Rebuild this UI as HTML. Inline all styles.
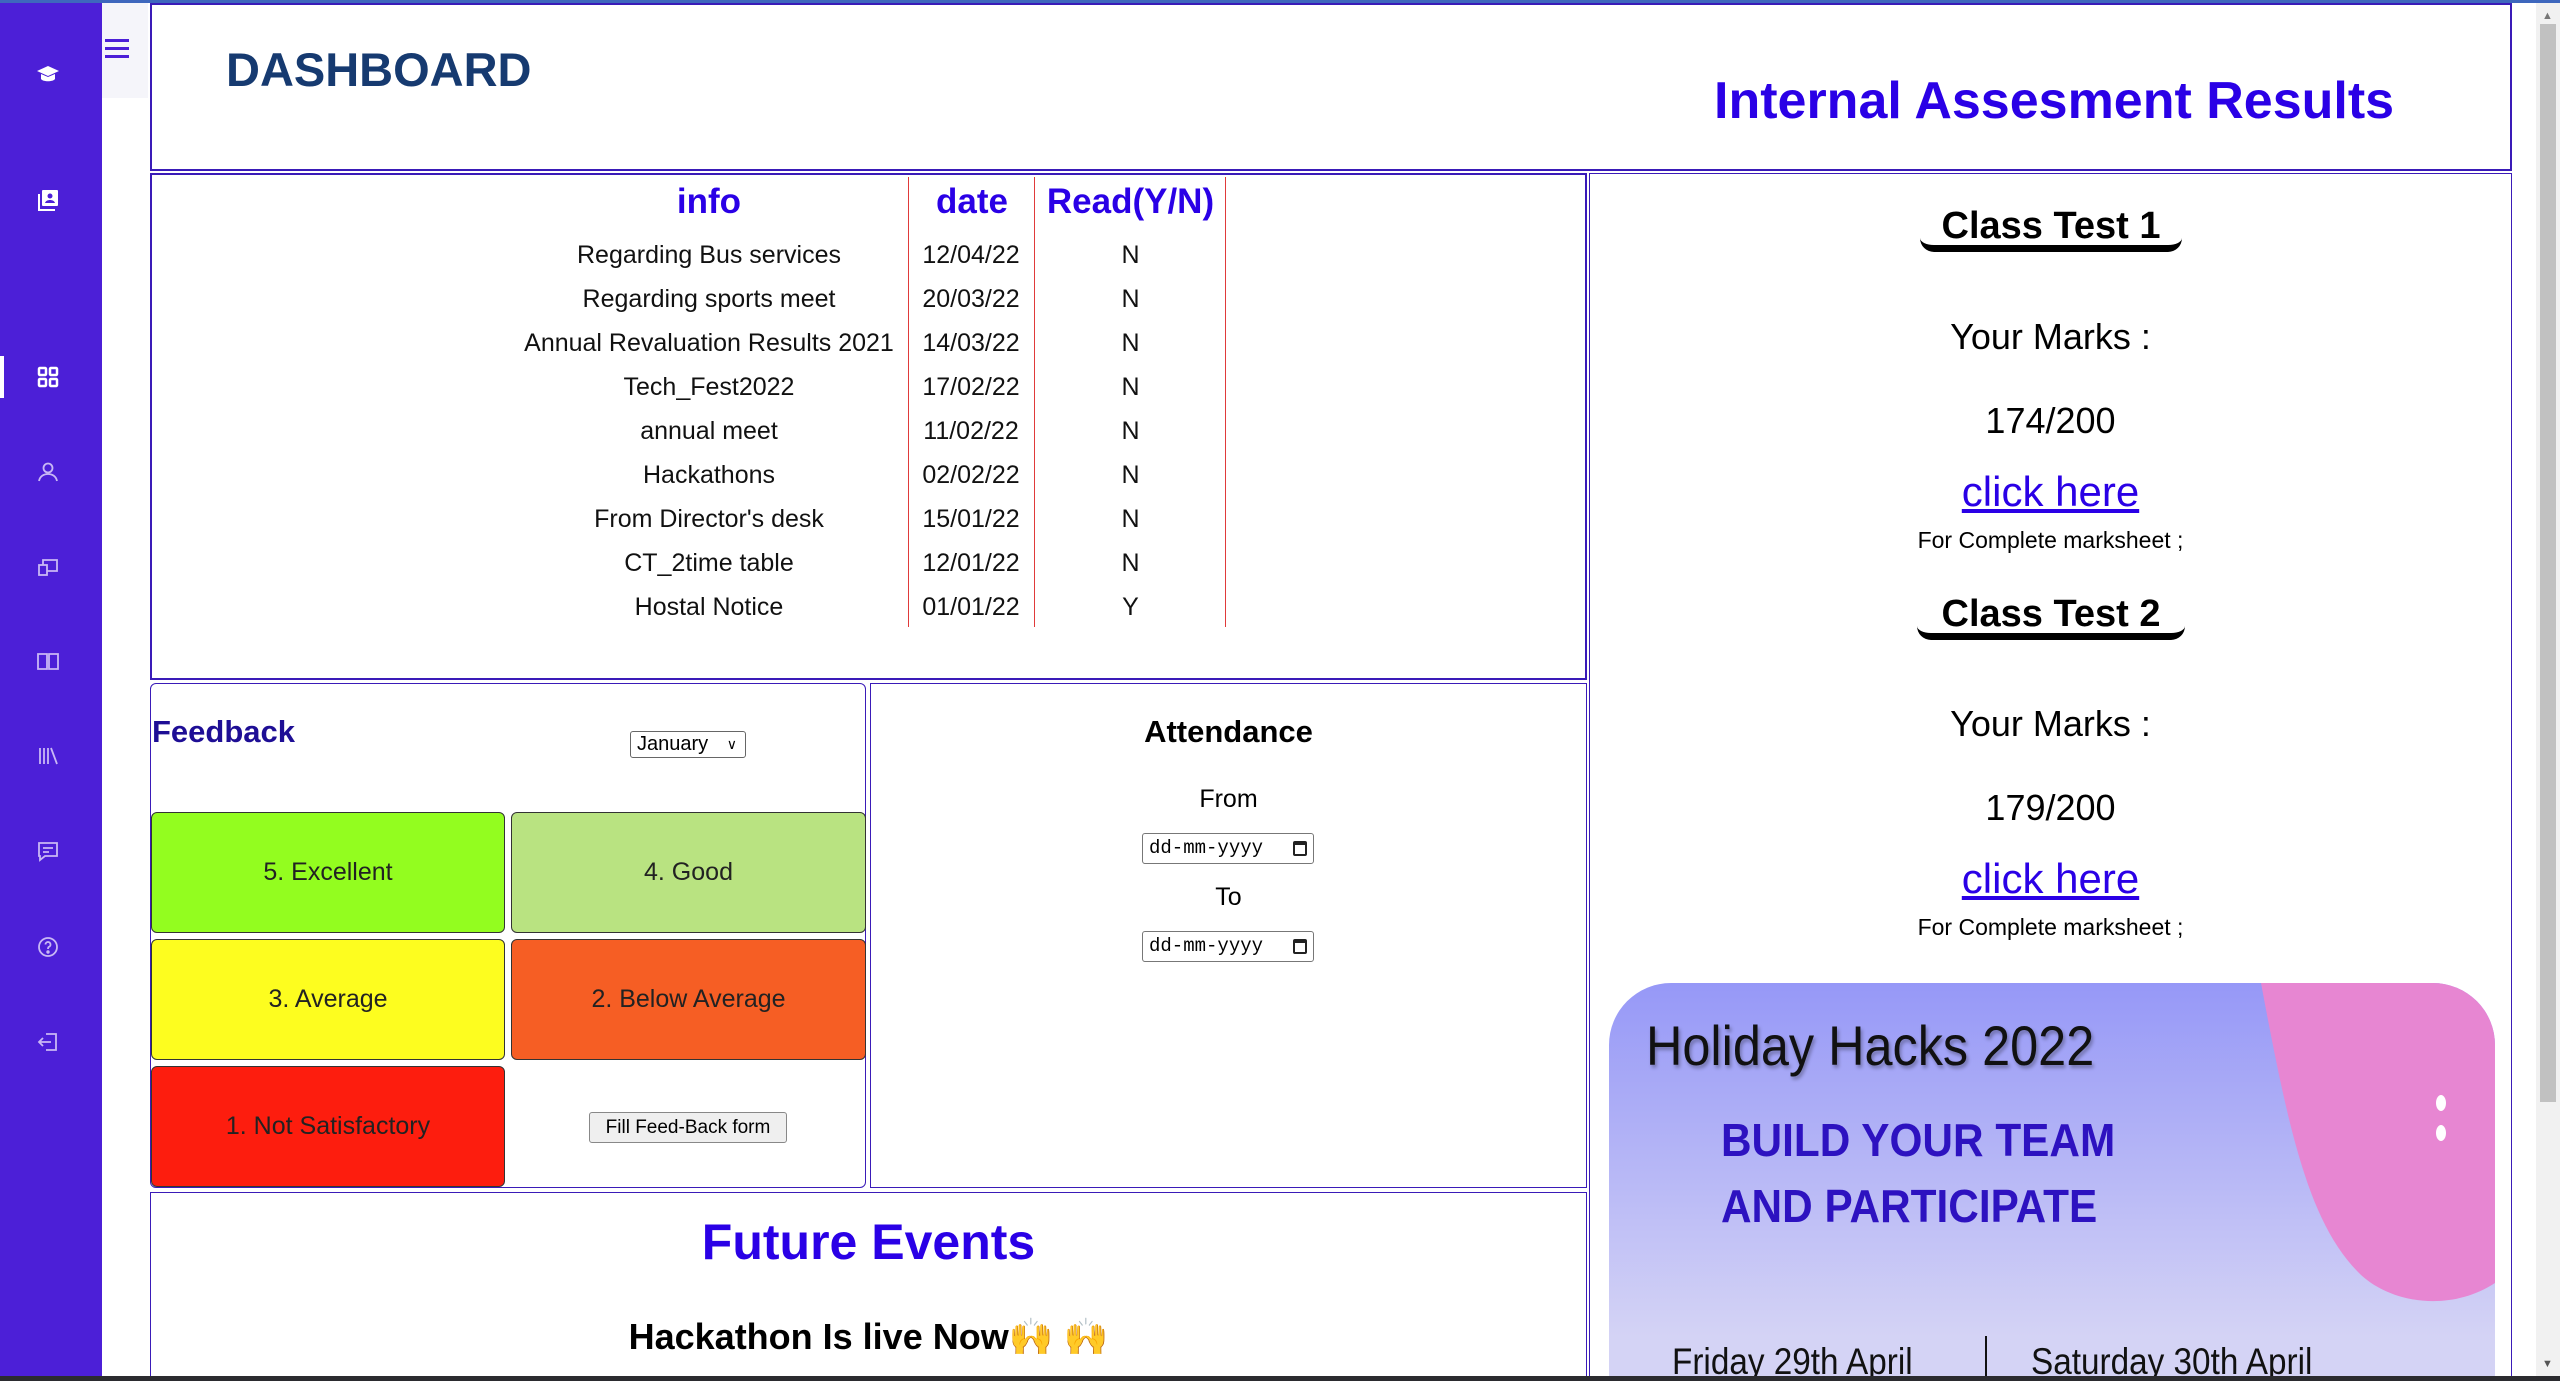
<!DOCTYPE html>
<html><head><meta charset="utf-8"><style>
*{box-sizing:border-box;margin:0;padding:0}
html,body{width:2560px;height:1381px;overflow:hidden}
body{background:#fff;position:relative;font-family:"Liberation Sans",sans-serif;color:#000}
.a{position:absolute}
.box{position:absolute;border:2px solid #3a1bb8}
.c{position:absolute;text-align:center;white-space:nowrap}
.btn{position:absolute;border:1.5px solid #333;border-radius:6px;display:flex;align-items:center;justify-content:center;font-size:25px;color:#222}
.ic{position:absolute;left:36px;width:24px;height:24px}
.row{position:absolute;left:150px;width:1436px;height:44px;font-size:25px;color:#111}
.row span{position:absolute;top:0;line-height:40px;text-align:center;white-space:nowrap}
.row span:nth-child(1){left:200px;width:718px}
.row span:nth-child(2){left:758px;width:126px}
.row span:nth-child(3){left:886px;width:189px}
.vl{position:absolute;width:1px;background:#e03a3a}
.ct{position:absolute;left:1920px;width:262px;height:46px;border-bottom:7px solid #000;border-radius:0 0 14px 14px;text-align:center;font-weight:bold;font-size:38px;line-height:40px}
.inp{position:absolute;left:1142px;width:172px;height:31px;border:1px solid #777;border-radius:3px;font-family:"Liberation Mono",monospace;font-size:19px;line-height:29px;padding-left:6px}
.inp i{position:absolute;right:6px;top:7px;width:14px;height:15px;border:2px solid #222;border-top-width:4px;border-radius:2px}
</style></head><body>
<div class="a" style="left:0;top:0;width:2560px;height:3px;background:#3e67bd"></div>
<div class="a" style="left:0;top:3px;width:102px;height:1378px;background:#4c1fd7"></div>
<div class="a" style="left:102px;top:3px;width:46px;height:95px;background:#f5f5fa"></div>
<div class="a" style="left:105px;top:39px;width:24px;height:3px;background:#4c1fd7"></div>
<div class="a" style="left:105px;top:47px;width:24px;height:3px;background:#4c1fd7"></div>
<div class="a" style="left:105px;top:55px;width:24px;height:3px;background:#4c1fd7"></div>
<svg class="ic" style="top:62px" viewBox="0 0 24 24"><path d="M1 9 12 4 23 9 12 14Z M5 12v5c2 3 12 3 14 0v-5l-7 3z" fill="#fff"/></svg>
<svg class="ic" style="top:188px" viewBox="0 0 24 24"><rect x="6" y="2" width="16" height="16" rx="1" fill="#fff"/><circle cx="14" cy="8" r="2.5" fill="#4c1fd7"/><path d="M9 15c1-4 9-4 10 0z" fill="#4c1fd7"/><path d="M3 6v16h16" stroke="#fff" stroke-width="2" fill="none"/></svg>
<div class="a" style="left:0;top:356px;width:4px;height:42px;background:#fff"></div>
<svg class="ic" style="top:365px" viewBox="0 0 24 24" fill="none" stroke="#fff" stroke-width="2.5"><rect x="3" y="3" width="7" height="7" rx="1"/><rect x="14" y="3" width="7" height="7" rx="1"/><rect x="3" y="14" width="7" height="7" rx="1"/><rect x="14" y="14" width="7" height="7" rx="1"/></svg>
<svg class="ic" style="top:460px" viewBox="0 0 24 24" fill="none" stroke="#c9b8f5" stroke-width="1.8"><circle cx="12" cy="8" r="4.5"/><path d="M3 21c1-5 5-7 9-7s8 2 9 7"/></svg>
<svg class="ic" style="top:555px" viewBox="0 0 24 24" fill="none" stroke="#c9b8f5" stroke-width="1.8"><rect x="3" y="10" width="8" height="10"/><path d="M7 10V5h14v11H11"/></svg>
<svg class="ic" style="top:649px" viewBox="0 0 24 24" fill="none" stroke="#c9b8f5" stroke-width="1.8"><path d="M2 5h9v15H2z M13 5h9v15h-9z"/></svg>
<svg class="ic" style="top:744px" viewBox="0 0 24 24" fill="none" stroke="#c9b8f5" stroke-width="1.8"><path d="M4 4v16 M8 4v16 M12 4v16 M15 4l6 16"/></svg>
<svg class="ic" style="top:839px" viewBox="0 0 24 24" fill="none" stroke="#c9b8f5" stroke-width="1.8"><path d="M3 4h18v13H9l-5 4v-4H3z M7 9h10 M7 13h6"/></svg>
<svg class="ic" style="top:935px" viewBox="0 0 24 24" fill="none" stroke="#c9b8f5" stroke-width="1.8"><circle cx="12" cy="12" r="9"/><path d="M9.5 9.5a2.5 2.5 0 1 1 3.5 2.3c-1 .4-1 1.2-1 2.2"/><circle cx="12" cy="17" r=".8" fill="#c9b8f5"/></svg>
<svg class="ic" style="top:1030px" viewBox="0 0 24 24" fill="none" stroke="#c9b8f5" stroke-width="1.8"><path d="M10 4h10v16H10 M15 12H3 M7 8l-4 4 4 4"/></svg>

<div class="box" style="left:150px;top:3px;width:2362px;height:168px"></div>
<div class="a" style="left:226px;top:42px;font-size:47px;font-weight:bold;color:#163a70">DASHBOARD</div>
<div class="a" style="left:1714px;top:71px;font-size:52px;font-weight:bold;color:#2a00e6">Internal Assesment Results</div>

<div class="box" style="left:150px;top:173px;width:1437px;height:507px"></div>
<div class="vl" style="left:908px;top:177px;height:450px"></div>
<div class="vl" style="left:1034px;top:177px;height:450px"></div>
<div class="vl" style="left:1225px;top:177px;height:450px"></div>
<div class="c" style="left:609px;width:200px;top:182px;font-size:35px;font-weight:bold;color:#2a00e6">info</div>
<div class="c" style="left:910px;width:124px;top:182px;font-size:35px;font-weight:bold;color:#2a00e6">date</div>
<div class="c" style="left:1036px;width:189px;top:182px;font-size:35px;font-weight:bold;color:#2a00e6">Read(Y/N)</div>
<div class="row" style="top:235px"><span>Regarding Bus services</span><span>12/04/22</span><span>N</span></div>
<div class="row" style="top:279px"><span>Regarding sports meet</span><span>20/03/22</span><span>N</span></div>
<div class="row" style="top:323px"><span>Annual Revaluation Results 2021</span><span>14/03/22</span><span>N</span></div>
<div class="row" style="top:367px"><span>Tech_Fest2022</span><span>17/02/22</span><span>N</span></div>
<div class="row" style="top:411px"><span>annual meet</span><span>11/02/22</span><span>N</span></div>
<div class="row" style="top:455px"><span>Hackathons</span><span>02/02/22</span><span>N</span></div>
<div class="row" style="top:499px"><span>From Director's desk</span><span>15/01/22</span><span>N</span></div>
<div class="row" style="top:543px"><span>CT_2time table</span><span>12/01/22</span><span>N</span></div>
<div class="row" style="top:587px"><span>Hostal Notice</span><span>01/01/22</span><span>Y</span></div>

<div class="box" style="left:150px;top:683px;width:716px;height:505px;border-width:1.5px;border-radius:6px"></div>
<div class="a" style="left:152px;top:714px;font-size:31px;font-weight:bold;color:#1e0e95">Feedback</div>
<div class="a" style="left:630px;top:731px;width:116px;height:27px;border:1px solid #666;border-radius:3px;font-size:20px;line-height:25px;padding-left:6px">January <span style="position:absolute;right:8px;font-size:14px">&#8744;</span></div>
<div class="btn" style="left:151px;top:812px;width:354px;height:121px;background:#93fd1f">5. Excellent</div>
<div class="btn" style="left:511px;top:812px;width:355px;height:121px;background:#b9e381">4. Good</div>
<div class="btn" style="left:151px;top:939px;width:354px;height:121px;background:#fdfd1f">3. Average</div>
<div class="btn" style="left:511px;top:939px;width:355px;height:121px;background:#f65e24">2. Below Average</div>
<div class="btn" style="left:151px;top:1066px;width:354px;height:121px;background:#fd1d0e">1. Not Satisfactory</div>
<div class="a" style="left:589px;top:1112px;width:198px;height:31px;border:1px solid #888;border-radius:3px;background:#efefef;font-size:19px;line-height:29px;text-align:center">Fill Feed-Back form</div>

<div class="box" style="left:870px;top:683px;width:717px;height:505px;border-width:1.5px"></div>
<div class="c" style="left:870px;width:717px;top:714px;font-size:31px;font-weight:bold">Attendance</div>
<div class="c" style="left:870px;width:717px;top:785px;font-size:25px">From</div>
<div class="inp" style="top:833px">dd-mm-yyyy<i></i></div>
<div class="c" style="left:870px;width:717px;top:883px;font-size:25px">To</div>
<div class="inp" style="top:931px">dd-mm-yyyy<i></i></div>

<div class="box" style="left:150px;top:1192px;width:1437px;height:190px;border-width:1.5px"></div>
<div class="c" style="left:150px;width:1437px;top:1213px;font-size:50px;font-weight:bold;color:#2a00e6">Future Events</div>
<div class="c" style="left:150px;width:1437px;top:1316px;font-size:36px;font-weight:bold">Hackathon Is live Now🙌 🙌</div>

<div class="box" style="left:1589px;top:173px;width:923px;height:1210px;border-width:1.5px"></div>
<div class="ct" style="top:206px">Class Test 1</div>
<div class="c" style="left:1589px;width:923px;top:316px;font-size:36px">Your Marks :</div>
<div class="c" style="left:1589px;width:923px;top:400px;font-size:36px">174/200</div>
<div class="c" style="left:1589px;width:923px;top:468px;font-size:42px;color:#2a00e6;text-decoration:underline">click here</div>
<div class="c" style="left:1589px;width:923px;top:527px;font-size:23px">For Complete marksheet ;</div>
<div class="ct" style="top:594px;left:1917px;width:268px">Class Test 2</div>
<div class="c" style="left:1589px;width:923px;top:703px;font-size:36px">Your Marks :</div>
<div class="c" style="left:1589px;width:923px;top:787px;font-size:36px">179/200</div>
<div class="c" style="left:1589px;width:923px;top:855px;font-size:42px;color:#2a00e6;text-decoration:underline">click here</div>
<div class="c" style="left:1589px;width:923px;top:914px;font-size:23px">For Complete marksheet ;</div>

<div class="a" style="left:1609px;top:983px;width:886px;height:393px;border-radius:62px 62px 0 0;overflow:hidden;background:linear-gradient(#9698f7,#d4d3f5 90%)">
<svg class="a" style="left:0;top:0" width="886" height="420"><path d="M652 0 L886 0 L886 300 C840 330 780 320 750 290 C700 240 680 150 652 0Z" fill="#e786d2"/><ellipse cx="832" cy="120" rx="5" ry="8" fill="#fff"/><ellipse cx="832" cy="150" rx="5" ry="8" fill="#fff"/><line x1="377" y1="353" x2="377" y2="400" stroke="#111" stroke-width="2"/></svg>
<div class="a" style="left:37px;top:30px;font-size:56px;color:#111;transform:scaleX(.9);transform-origin:left;text-shadow:2px 3px 4px rgba(0,0,0,.3)">Holiday Hacks 2022</div>
<div class="a" style="left:112px;top:124px;font-size:46px;font-weight:bold;color:#2d12c0;line-height:66px;transform:scaleX(.92);transform-origin:left">BUILD YOUR TEAM<br>AND PARTICIPATE</div>
<div class="a" style="left:63px;top:358px;font-size:37px;color:#111;transform:scaleX(.9);transform-origin:left">Friday 29th April</div>
<div class="a" style="left:422px;top:358px;font-size:37px;color:#111;transform:scaleX(.9);transform-origin:left">Saturday 30th April</div>
</div>

<div class="a" style="left:2536px;top:3px;width:24px;height:1373px;background:#f1f1f1"></div>
<div class="a" style="left:2540px;top:24px;width:16px;height:1078px;background:#c1c1c1"></div>
<div class="a" style="left:2542px;top:10px;font-size:11px;color:#777">&#9650;</div>
<div class="a" style="left:2542px;top:1358px;font-size:11px;color:#555">&#9660;</div>
<div class="a" style="left:0;top:1376px;width:2560px;height:5px;background:#2b2b2f"></div>
</body></html>
